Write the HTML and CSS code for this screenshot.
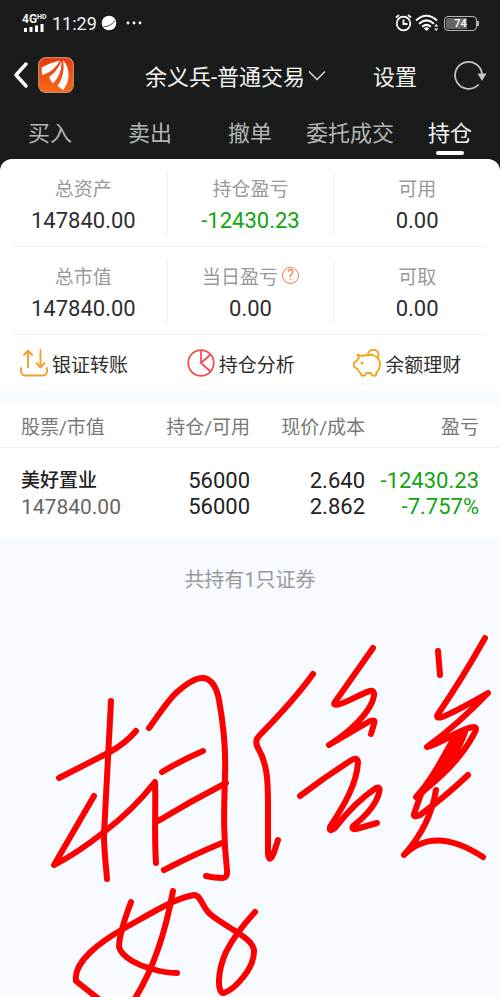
FILE: index.html
```
<!DOCTYPE html>
<html lang="zh-CN">
<head>
<meta charset="utf-8">
<meta name="viewport" content="width=device-width, initial-scale=1">
<title>持仓</title>
<link rel="stylesheet" href="styles.css">
</head>
<body>
<!-- Top -->
<header class="top">
  <div class="status">
    <div class="network">
      <span class="net-type">4G<sup>HD</sup></span>
      <svg width="20" height="8" viewBox="0 0 20 8"><path d="M0 4h3v4H0zM5.500 3h3v5h-3zM11 1.500h3V8h-3zM16.500 0h3v8h-3z" fill="#fff"/></svg>
    </div>
    <span class="time">11:29</span>
    <svg class="planet" width="16" height="16" viewBox="0 0 16 16"><circle cx="8" cy="8" r="7.300" fill="#fff"/><path d="M2.500 11.800Q10 11.500 14 5.500" fill="none" stroke="#1a1c1b" stroke-width=".8"/></svg>
    <svg width="16" height="4" viewBox="0 0 16 4" fill="#fff"><circle cx="2" cy="2" r="1.400"/><circle cx="8" cy="2" r="1.400"/><circle cx="14" cy="2" r="1.400"/></svg>
    <div class="status-right">
      <svg width="17" height="18" viewBox="0 0 17 18" fill="none" stroke="#fff" stroke-width="1.800"><circle cx="8.500" cy="9.500" r="6.800"/><path d="M8.500 5.500v4.500h4M1 3.500l3-2.500M16 3.500L13 1"/></svg>
      <svg width="24" height="18" viewBox="0 0 24 18" fill="none" stroke="#fff" stroke-width="2"><path d="M1 6.500Q11.500-3 22 6.500M4 9.800Q11.500 3 19 9.800M7.200 12.800Q11.500 9 15.800 12.800"/><path d="M8.800 14.200Q11.500 12.200 14.200 14.200L11.500 17z" fill="#fff" stroke="none"/><path d="M19.200 12.500l2-2.500 2 2.500zM19.200 14.500h4l-2 2.500z" fill="#fff" stroke="none"/></svg>
      <div class="battery">74</div>
    </div>
  </div>
  <div class="titlebar">
    <button class="back" aria-label="返回"><svg width="16" height="28" viewBox="0 0 16 28"><path d="M13 3L3 14l10 11" fill="none" stroke="#fff" stroke-width="3.400" stroke-linecap="round" stroke-linejoin="round"/></svg></button>
    <svg class="logo" width="36" height="36" viewBox="0 0 36 36"><defs><linearGradient id="lg" x1="0" y1="0" x2="0" y2="1"><stop offset="0" stop-color="#e9360f"/><stop offset="1" stop-color="#fa6b14"/></linearGradient></defs><rect x=".7" y=".7" width="34.600" height="34.600" rx="7" fill="url(#lg)" stroke="#c98a70" stroke-width="1.200"/><path d="M22 3.500C14 5.500 8 8 3.500 10.500L4 18C11 16 18 11.500 22 3.500z" fill="#fff"/><path d="M23.500 4C20 12 15.500 17 11 20l3.500 6.500C20 22 24 14 23.500 4z" fill="#fff"/><path d="M25 3C26.500 13 25 21 19.500 29L25 33C32 25 33 12 25 3z" fill="#fff"/></svg>
    <button class="account">余义兵-普通交易<svg width="18" height="11" viewBox="0 0 18 11"><path d="M1 1.500l8 8 8-8" fill="none" stroke="#ddd" stroke-width="1.400"/></svg></button>
    <button class="setting">设置</button>
    <button class="refresh" aria-label="刷新"><svg width="34" height="32" viewBox="0 0 34 32"><path d="M25.500 25.500A13.500 13.500 0 1 1 29 15" fill="none" stroke="#c4c4c4" stroke-width="1.800"/><path d="M24.500 14.500h9L29 22z" fill="#c4c4c4"/></svg></button>
  </div>
  <nav class="tabs">
    <a href="#">买入</a>
    <a href="#">卖出</a>
    <a href="#">撤单</a>
    <a href="#">委托成交</a>
    <a href="#" class="active">持仓</a>
  </nav>
</header>

<!-- Summary -->
<section class="card">
  <div class="summary">
    <div class="item"><span class="label">总资产</span><span class="num">147840.00</span></div>
    <div class="item"><span class="label">持仓盈亏</span><span class="num green">-12430.23</span></div>
    <div class="item"><span class="label">可用</span><span class="num">0.00</span></div>
  </div>
  <div class="summary">
    <div class="item"><span class="label">总市值</span><span class="num">147840.00</span></div>
    <div class="item"><span class="label">当日盈亏<button class="help" aria-label="说明">?</button></span><span class="num">0.00</span></div>
    <div class="item"><span class="label">可取</span><span class="num">0.00</span></div>
  </div>
  <div class="actions">
    <a href="#"><svg width="28" height="28" viewBox="0 0 28 28" fill="none" stroke="#f2a033" stroke-width="1.900" stroke-linecap="round" stroke-linejoin="round"><path d="M1 19v3q0 4.500 4.500 4.500h17q4.500 0 4.500-4.500v-3M8 18.500V2M4 6l4-4.500L12 6M20.500 1v17M16.500 14l4 4.500 4-4.500"/></svg>银证转账</a>
    <a href="#"><svg width="28" height="28" viewBox="0 0 28 28" fill="none" stroke="#f5494d" stroke-width="1.700" stroke-linejoin="round"><circle cx="14" cy="14" r="12.800"/><path d="M14 1.200V14l9.500-8.500M14 14l9.500 8.500"/></svg>持仓分析</a>
    <a href="#"><svg width="28" height="28" viewBox="0 0 28 28" fill="none" stroke="#f9a01b" stroke-width="1.800" stroke-linecap="round" stroke-linejoin="round"><path d="M4.500 5.500q2 1 5 1.500 3-1 6-1h4q7.500 2.500 7.500 9 0 5-3.500 8.500l-.5 3h-4l-1-2.500h-5l-1 2.500H8.500L7.500 24q-2-1.500-3-4L1 17.500v-4l3-2q.5-1.500 2-2.500zM15 6C14.500-.5 25-1 25.500 5q0 2-1 3.500"/><circle cx="9" cy="14" r=".7" fill="#f9a01b"/></svg>余额理财</a>
  </div>
</section>

<!-- Holdings -->
<table class="holdings">
  <thead>
    <tr><th>股票/市值</th><th>持仓/可用</th><th>现价/成本</th><th>盈亏</th></tr>
  </thead>
  <tbody>
    <tr>
      <td><span class="stock">美好置业</span><span class="value">147840.00</span></td>
      <td><span>56000</span><span>56000</span></td>
      <td><span>2.640</span><span>2.862</span></td>
      <td class="green"><span>-12430.23</span><span>-7.757%</span></td>
    </tr>
  </tbody>
</table>
<p class="total">共持有1只证券</p>

<!-- Red pen -->
<svg class="pen" viewBox="0 600 500 397" fill="none" stroke="#fe0000" stroke-width="6" stroke-linecap="round" stroke-linejoin="round">
  <path d="M111 701C109 745 106 790 104 835 104 852 106 865 107 879"/>
  <path d="M59 778L108 753Q125 744 136 731"/>
  <path d="M94 796L54 865C64 860 85 847 104 832Q133 810 155 782C156 800 154 835 156 863"/>
  <path d="M149 728C158 716 167 701 177 692 186 684 197 677 204 678 213 680 217 689 219 700 223 722 226 750 225 775 224 810 223 835 227 870Q228 878 222 878 214 878 206 876"/>
  <path d="M162 772Q182 760 203 751M158 821Q191 801 226 783M164 870Q195 854 222 843"/>
  <path d="M313 674Q296 698 259 736 254 741 258 748C267 763 268 780 268 803V854Q269 863 273 855L278 840"/>
  <path d="M373 648L335 702Q332 706 340 704C350 701 362 693 370 691Q375 690 374 696C371 712 350 732 329 745L370 721Q376 719 374 724L371 734"/>
  <path d="M300 796Q325 777 350 761 357 756 358 762C357 785 342 808 330 827Q329 833 335 828C348 811 361 798 376 788Q381 786 379 793C375 808 362 819 353 826Q351 830 356 829L377 823"/>
  <path d="M438 651L440 675"/>
  <path d="M485 638Q462 679 438 714 435 719 442 717C457 711 472 702 488 693 470 712 450 730 427 747 445 742 460 728 474 727Q478 728 474 734C460 760 440 778 416 797 432 780 443 757 454 738L465 732C458 753 440 775 422 792"/>
  <path d="M459 737C449 760 434 778 421 794L414 814Q413 818 420 815 445 797 468 775"/>
  <path d="M436 790C432 815 420 837 404 855 426 833 454 838 483 857"/>
  <path d="M131 902C125 918 119 935 119 947 122 958 140 966 152 969Q165 973 177 973"/>
  <path d="M173 891C165 935 153 970 134 1000"/>
  <path d="M100 1000L76 981C73 962 100 942 123 929 150 914 175 898 194 895 201 895 202 907 210 914 225 927 252 937 254 950 255 968 235 989 224 993 217 994 217 972 226 952Q235 934 255 912"/>
</svg>
</body>
</html>
```

FILE: styles.css
```
* {
  box-sizing: border-box;
}
body {
  margin: 0;
  background: #f7faff;
  color: #2e2e2e;
  font-family: Roboto, "Noto Sans CJK SC", sans-serif;
  font-size: 20px;
}
a {
  color: inherit;
  text-decoration: none;
}
button {
  padding: 0;
  border: 0;
  background: none;
  color: inherit;
  font: inherit;
  cursor: pointer;
}
svg {
  display: block;
  flex: none;
}
.green {
  color: #12a512;
}

/* top */
.top {
  background: #1a1c1b;
  color: #f4f4f4;
  padding-bottom: 24px;
}
.status {
  display: flex;
  align-items: center;
  height: 46px;
  padding: 0 22px;
}
.network {
  width: 26px;
  margin-right: 4px;
}
.network svg {
  margin-left: 2px;
}
.net-type {
  display: block;
  font-size: 12px;
  font-weight: bold;
  line-height: 10px;
  white-space: nowrap;
}
.net-type sup {
  font-size: 7px;
  line-height: 1px;
  vertical-align: 4px;
}
.time {
  font-size: 18px;
  margin-right: 4px;
}
.planet {
  margin-right: 9px;
}
.status-right {
  display: flex;
  align-items: center;
  gap: 3px;
  margin-left: auto;
}
.battery {
  position: relative;
  width: 33px;
  height: 15px;
  margin: 0 1px 0 2px;
  padding: 1px;
  border: 1px solid #b5b5b5;
  border-radius: 4px;
  background: linear-gradient(90deg, #666 74%, #1a1c1b 74%) content-box;
  font-size: 11px;
  font-weight: bold;
  line-height: 11px;
  text-align: center;
}
.battery::after {
  content: "";
  position: absolute;
  top: 4px;
  right: -3px;
  width: 2px;
  height: 5px;
  background: #b5b5b5;
}
.titlebar {
  display: flex;
  align-items: center;
  height: 58px;
  padding: 0 13px;
  font-size: 22px;
}
.logo {
  margin-left: 9px;
}
.account {
  display: flex;
  flex: 1;
  align-items: center;
  justify-content: center;
  gap: 3px;
  padding-left: 24px;
}
.refresh {
  margin-left: 36px;
}
.tabs {
  display: grid;
  grid-template-columns: repeat(5, 1fr);
  font-size: 22px;
  color: #b4b4b4;
  text-align: center;
}
.tabs a {
  height: 43px;
  line-height: 60px;
}
.tabs .active {
  color: #f4f4f4;
}
.tabs .active::after {
  content: "";
  display: block;
  width: 28px;
  height: 4px;
  margin: -13px auto 0;
  border-radius: 2px;
  background: #fff;
}

/* summary */
.card {
  margin-top: -12px;
  padding-top: 12px;
  border-radius: 12px 12px 0 0;
  background: #fff;
}
.summary {
  display: grid;
  grid-template-columns: repeat(3, 1fr);
  height: 76px;
  margin-bottom: 12px;
  background: linear-gradient(#f2f2f2, #f2f2f2) bottom / calc(100% - 28px) 1px no-repeat;
}
.item {
  height: 64px;
  text-align: center;
}
.item + .item {
  border-left: 1px solid #f2f2f2;
}
.label {
  display: flex;
  align-items: center;
  justify-content: center;
  height: 32px;
  color: #999;
  font-size: 19px;
}
.num {
  display: block;
  font-size: 22px;
  line-height: 36px;
}
.help {
  width: 17px;
  height: 17px;
  margin-left: 4px;
  border: 1px solid #ee7444;
  border-radius: 50%;
  color: #ee7444;
  font-size: 14px;
  line-height: 15px;
}
.actions {
  display: grid;
  grid-template-columns: repeat(3, 1fr);
  height: 56px;
  margin-top: -12px;
}
.actions a {
  display: flex;
  align-items: center;
  gap: 4px;
  padding-left: 20px;
  font-size: 19px;
}

/* holdings */
.holdings {
  width: 100%;
  margin-top: 13px;
  border-collapse: collapse;
  table-layout: fixed;
  background: #fff;
  color: #222;
}
.holdings th {
  height: 43px;
  padding: 0;
  border-bottom: 1px solid #f1f1f4;
  color: #777;
  font-size: 19px;
  font-weight: normal;
  text-align: right;
}
.holdings th:nth-child(1) {
  width: 32%;
}
.holdings th:nth-child(2) {
  width: 18%;
}
.holdings th:nth-child(3) {
  width: 23%;
}
.holdings td {
  padding: 20px 0 18px;
  font-size: 22px;
  text-align: right;
}
.holdings th:first-child,
.holdings td:first-child {
  padding-left: 21px;
  text-align: left;
}
.holdings th:last-child,
.holdings td:last-child {
  padding-right: 21px;
}
.holdings span {
  display: block;
  height: 26px;
  line-height: 26px;
}
.holdings .stock {
  font-size: 19px;
  font-weight: 500;
}
.holdings .value {
  color: #666;
  font-size: 21px;
}
.total {
  margin: 0;
  padding-top: 26px;
  color: #999;
  line-height: 32px;
  text-align: center;
}
.pen {
  width: 100%;
  margin-top: 4px;
}
```
